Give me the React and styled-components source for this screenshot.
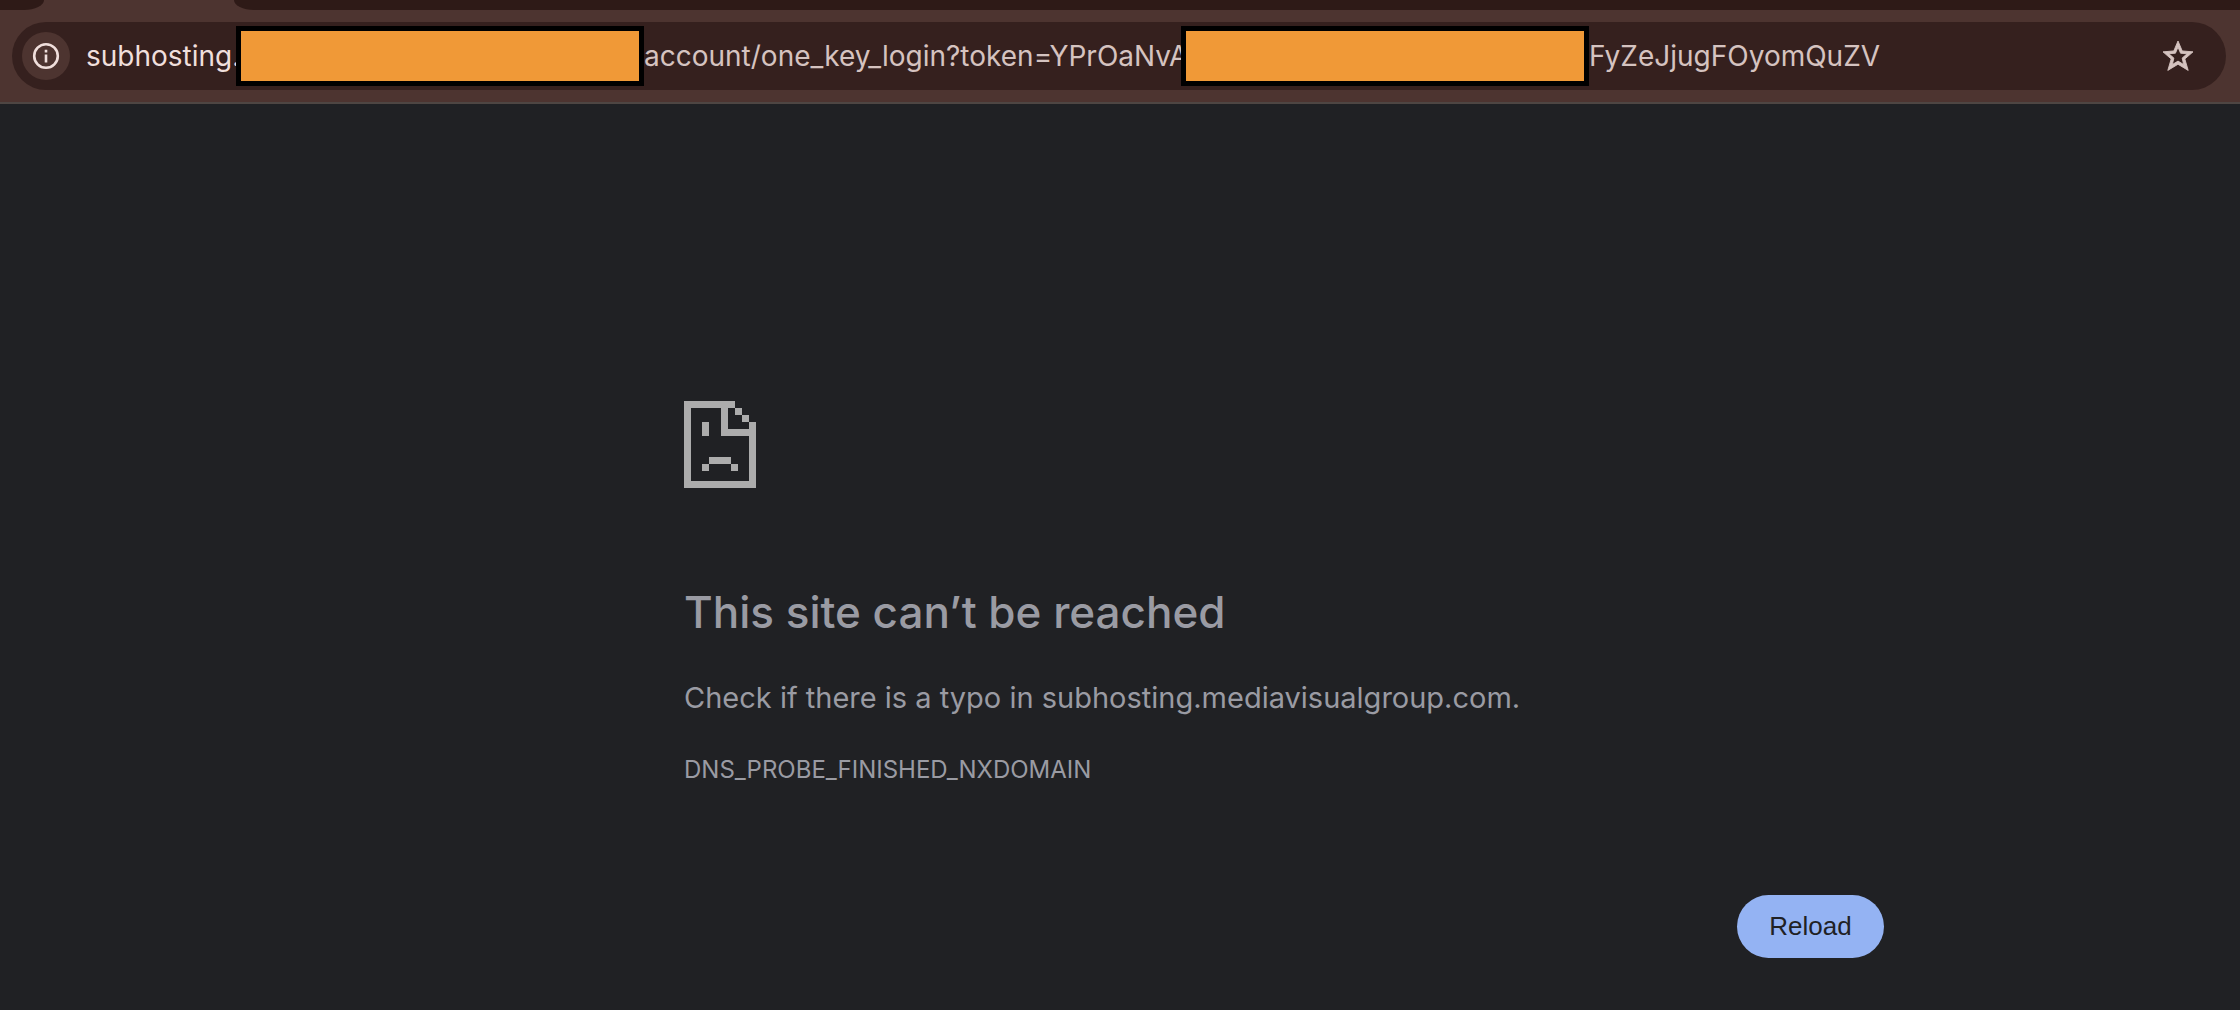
import * as React from "react";
import styled, { createGlobalStyle } from "styled-components";

export default function App() {
  return (
    <>
      <GlobalStyle />
      <StyledWindow>
        <StyledTabStrip>
          <StyledInactiveTab $width={44} $side="right" />
          <StyledActiveTab />
          <StyledInactiveTab $side="left" />
        </StyledTabStrip>
        <Toolbar />
        <ErrorPage />
      </StyledWindow>
    </>
  );
}

const Toolbar = () => (
  <StyledToolbar>
    <StyledAddressBar>
      <StyledInfoButton type="button" aria-label="View site information">
        <InfoIcon />
      </StyledInfoButton>
      <StyledUrlPart
        $width={150}
        $host
        readOnly
        aria-label="Address host"
        value="subhosting."
      />
      <StyledRedaction />
      <StyledUrlPart
        $width={537}
        readOnly
        aria-label="Address path"
        value="account/one_key_login?token=YPrOaNvA"
      />
      <StyledRedaction />
      <StyledUrlPart
        readOnly
        aria-label="Address token"
        value="FyZeJjugFOyomQuZV"
      />
      <StyledStarButton type="button" aria-label="Bookmark this tab">
        <StarIcon />
      </StyledStarButton>
    </StyledAddressBar>
  </StyledToolbar>
);

const ErrorPage = () => (
  <StyledPage>
    <StyledMessage>
      <SadPageIcon />
      <StyledTitle>This site can’t be reached</StyledTitle>
      <StyledText>
        Check if there is a typo in subhosting.mediavisualgroup.com.
      </StyledText>
      <StyledErrorCode>DNS_PROBE_FINISHED_NXDOMAIN</StyledErrorCode>
      <StyledButtons>
        <StyledReload type="button">Reload</StyledReload>
      </StyledButtons>
    </StyledMessage>
  </StyledPage>
);

const InfoIcon = () => (
  <svg width="28" height="28" viewBox="0 0 28 28" fill="none">
    <circle cx="14" cy="14" r="11.8" stroke="#f0dfdc" strokeWidth="2.6" />
    <path d="M12.7 12.5h2.6v8h-2.6zM12.7 7.8h2.6v2.7h-2.6z" fill="#f0dfdc" />
  </svg>
);

const StarIcon = () => (
  <svg width="36" height="36" viewBox="0 0 24 24" fill="#d5c3c0">
    <path
      d="M22 9.24l-7.19-.62L12 2 9.19 8.63 2 9.24l5.46 4.73L5.2 21.6 12 17.5l6.8 4.1-2.25-7.63L22 9.24zM12 15.4l-3.76 2.27 1-4.28-3.32-2.88 4.38-.38L12 6.1l1.71 4.04 4.38.38-3.32 2.88 1 4.28L12 15.4z"
      stroke="#d5c3c0"
      strokeWidth="0.6"
    />
  </svg>
);

const SadPageIcon = () => (
  <svg width="72" height="87" viewBox="0 0 72 87" fill="#acacac">
    <path d="M0 0H51V7H44V28H65V21H72V87H0ZM7 7V80H65V35H37V7Z" fillRule="evenodd" />
    <path d="M51 7h7v7h-7zM58 14h7v7h-7zM18 21h7v14h-7z" />
    <path d="M25 56h22v7h-22zM18 63h7v7h-7zM47 63h7v7h-7z" />
  </svg>
);

const GlobalStyle = createGlobalStyle`
  * {
    box-sizing: border-box;
  }
  body {
    margin: 0;
    background: #202124;
    font-family: Inter, "Liberation Sans", sans-serif;
  }
`;

const StyledWindow = styled.div`
  min-height: 100vh;
  display: flex;
  flex-direction: column;
`;

const StyledTabStrip = styled.div`
  display: flex;
  height: 10px;
  background: #4d3430;
`;

const StyledInactiveTab = styled.div`
  flex: ${(props) => (props.$width ? `0 0 ${props.$width}px` : "1")};
  background: #2e1a17;
  border-radius: ${(props) =>
    props.$side === "right"
      ? "0 0 20px 0 / 0 0 10px 0"
      : "0 0 0 20px / 0 0 0 10px"};
`;

const StyledActiveTab = styled.div`
  width: 190px;
`;

const StyledToolbar = styled.header`
  padding: 12px 14px 12px 12px;
  background: #4d3430;
  border-bottom: 2px solid #4e4643;
`;

const StyledAddressBar = styled.div`
  display: flex;
  align-items: center;
  height: 68px;
  padding: 0 30px 0 10px;
  border-radius: 34px;
  background: #35201e;
`;

const StyledInfoButton = styled.button`
  display: flex;
  align-items: center;
  justify-content: center;
  flex: none;
  width: 48px;
  height: 48px;
  margin-right: 16px;
  padding: 0;
  border: 0;
  border-radius: 50%;
  background: #4d3430;
`;

const StyledUrlPart = styled.input`
  flex: ${(props) => (props.$width ? `0 0 ${props.$width}px` : "1")};
  min-width: 0;
  height: 40px;
  padding: 0;
  border: 0;
  outline: 0;
  background: transparent;
  color: ${(props) => (props.$host ? "#f0dfdc" : "#d5c3c0")};
  font-family: inherit;
  font-size: 28px;
`;

const StyledRedaction = styled.span`
  flex: none;
  width: 408px;
  height: 60px;
  border: 5px solid #000;
  background: #f09937;
`;

const StyledStarButton = styled.button`
  display: flex;
  flex: none;
  padding: 0;
  border: 0;
  background: transparent;
`;

const StyledPage = styled.main`
  flex: 1;
  display: grid;
  grid-template-columns: 171fr minmax(0, 1200px) 89fr;
  background: #202124;
`;

const StyledMessage = styled.div`
  grid-column: 2;
  padding: 297px 0 50px;
`;

const StyledTitle = styled.h1`
  margin: 90px 0 0;
  color: #9a9ba3;
  font-size: 44px;
  font-weight: 500;
  line-height: 60px;
`;

const StyledText = styled.p`
  margin: 34px 0 0;
  color: #9a9ba3;
  font-size: 29px;
  line-height: 44px;
`;

const StyledErrorCode = styled.div`
  margin-top: 32px;
  color: #9a9ba3;
  font-size: 24px;
  line-height: 36px;
`;

const StyledButtons = styled.div`
  display: flex;
  justify-content: flex-end;
  margin-top: 107px;
`;

const StyledReload = styled.button`
  min-width: 147px;
  height: 63px;
  padding: 0 32px;
  border: 0;
  border-radius: 32px;
  background: #94b3f3;
  color: #202124;
  font-family: "Liberation Sans", Arial, sans-serif;
  font-size: 26px;
`;
